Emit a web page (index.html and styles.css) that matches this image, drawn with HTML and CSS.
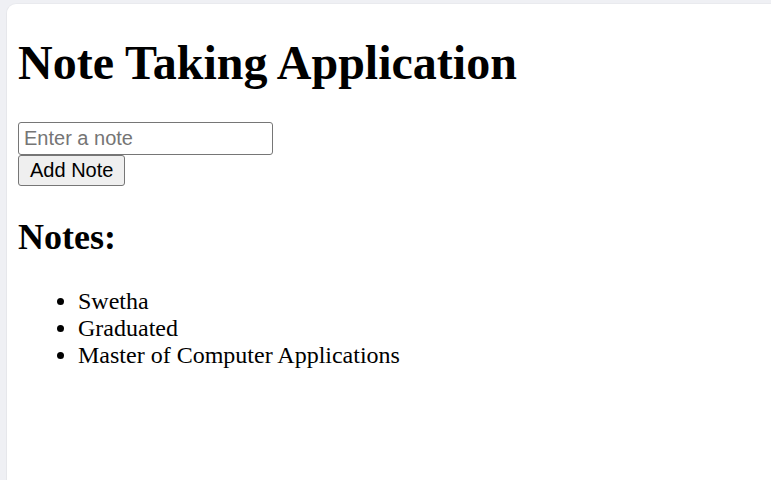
FILE: index.html
```html
<!DOCTYPE html>
<html>
<head>
<meta charset="utf-8">
<title>Note Taking Application</title>
<link rel="stylesheet" href="styles.css">
</head>
<body>
<div class="frame">
  <div class="panel">
    <div class="page">
      <h1 class="title">Note Taking Application</h1>
      <input class="note-input" type="text" placeholder="Enter a note"><br>
      <button class="add-btn">Add Note</button>
      <h2 class="subtitle">Notes:</h2>
      <ul class="notes">
        <li>Swetha</li>
        <li>Graduated</li>
        <li>Master of Computer Applications</li>
      </ul>
    </div>
  </div>
</div>
</body>
</html>
```
FILE: styles.css
```css
html, body {
  margin: 0;
  padding: 0;
  height: 100%;
}
body {
  background: #eff0f4;
  font-family: "Liberation Serif", "Times New Roman", serif;
  font-size: 24px;
  color: #000;
}
.frame {
  box-sizing: border-box;
  height: 100%;
  padding: 3px 0 0 6px;
  display: flex;
}
.panel {
  flex: 1;
  background: #fff;
  border-top-left-radius: 10px;
  border-left: 1px solid #e6e7eb;
  border-top: 1px solid #e9eaee;
  display: flow-root;
}
.page {
  padding: 0 11px;
}
.title {
  font-size: 48px;
  font-weight: bold;
  margin: 31px 0 32px;
}
.note-input {
  box-sizing: border-box;
  width: 255px;
  height: 33px;
  font-family: "Liberation Sans", Arial, sans-serif;
  font-size: 20px;
  padding: 1px 5px;
  border: 1px solid #767676;
  border-radius: 3px;
  margin: 0;
  color: #000;
}
.note-input::placeholder {
  color: #757575;
}
.add-btn {
  box-sizing: border-box;
  height: 31px;
  font-family: "Liberation Sans", Arial, sans-serif;
  font-size: 20px;
  padding: 0 11px;
  border: 1px solid #767676;
  border-radius: 3px;
  background: #efefef;
  color: #000;
  margin: 0;
}
.subtitle {
  font-size: 36px;
  font-weight: bold;
  margin: 30px 0;
}
.notes {
  margin: 24px 0;
  padding-left: 60px;
  line-height: 27px;
}
```
